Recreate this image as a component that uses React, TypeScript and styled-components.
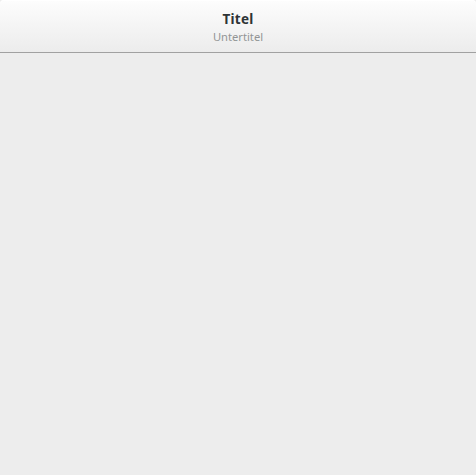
import * as React from "react";
import styled, { createGlobalStyle } from "styled-components";

const GlobalStyle = createGlobalStyle`
  html, body {
    margin: 0;
    padding: 0;
    height: 100%;
    background: #ededed;
  }
  #root {
    height: 100%;
  }
`;

const Window = styled.div`
  height: 100vh;
  display: flex;
  flex-direction: column;
  background: #ededed;
  font-family: "Noto Sans", "DejaVu Sans", sans-serif;
`;

const HeaderBar = styled.header`
  height: 52px;
  flex-shrink: 0;
  display: flex;
  flex-direction: column;
  align-items: center;
  justify-content: center;
  background: linear-gradient(to bottom, #fdfdfd, #ececec);
  border-bottom: 1px solid #a1a1a1;
  border-radius: 4px 4px 0 0;
  box-shadow: inset 0 1px 0 #ffffff;
`;

const Title = styled.div`
  font-size: 13.5px;
  font-weight: 700;
  letter-spacing: 0.2px;
  color: #2e3436;
  line-height: 16px;
  margin-top: 2px;
`;

const Subtitle = styled.div`
  font-size: 11.2px;
  color: #929595;
  line-height: 14px;
  margin-top: 3px;
`;

const Content = styled.main`
  flex: 1;
  background: #ededed;
`;

export default function App() {
  return (
    <>
      <GlobalStyle />
      <Window>
        <HeaderBar>
          <Title>Titel</Title>
          <Subtitle>Untertitel</Subtitle>
        </HeaderBar>
        <Content />
      </Window>
    </>
  );
}
